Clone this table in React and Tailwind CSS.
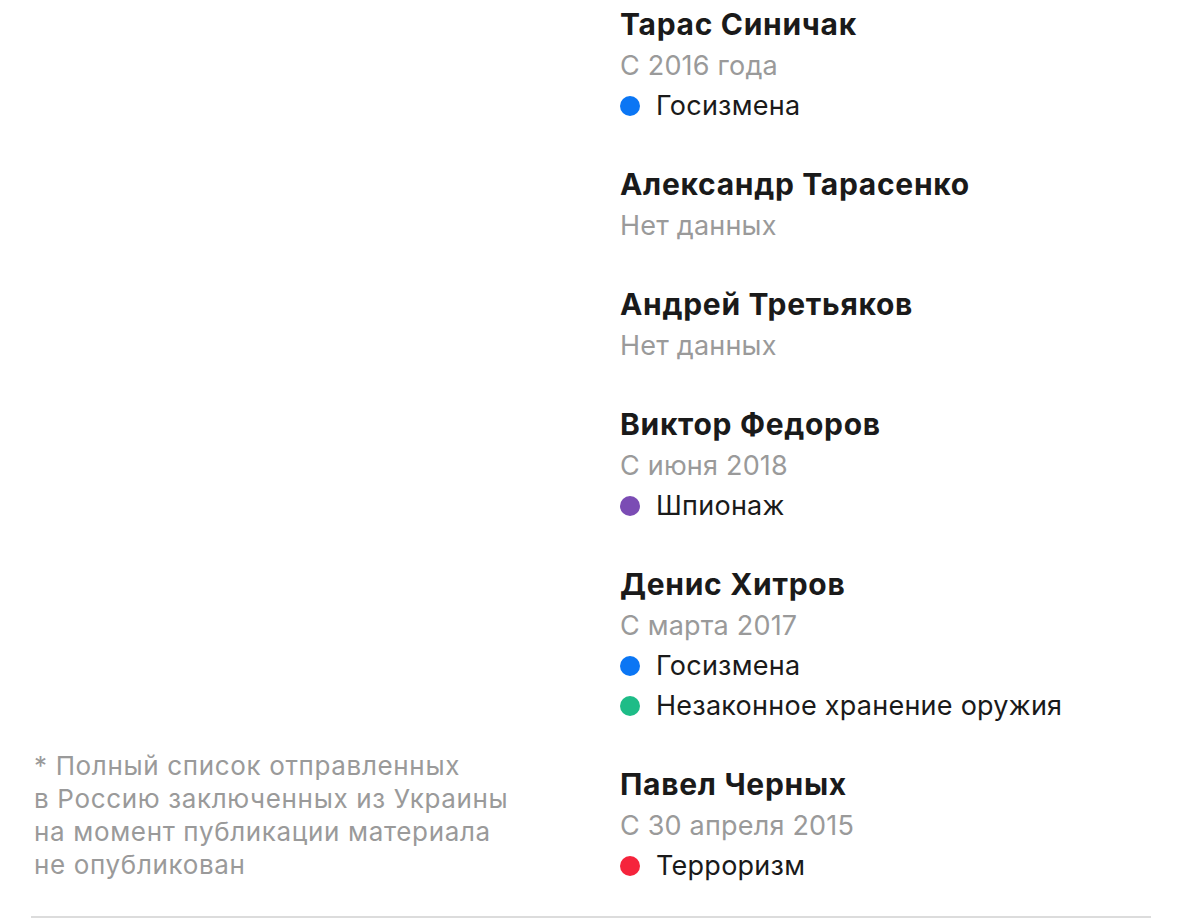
import React from "react"

const people = [
  { name: "Тарас Синичак", since: "С 2016 года", tags: [{ label: "Госизмена", color: "bg-[#0b76f4]" }] },
  { name: "Александр Тарасенко", since: "Нет данных", tags: [] },
  { name: "Андрей Третьяков", since: "Нет данных", tags: [] },
  { name: "Виктор Федоров", since: "С июня 2018", tags: [{ label: "Шпионаж", color: "bg-[#7b4cb4]" }] },
  {
    name: "Денис Хитров",
    since: "С марта 2017",
    tags: [
      { label: "Госизмена", color: "bg-[#0b76f4]" },
      { label: "Незаконное хранение оружия", color: "bg-[#1ebc87]" },
    ],
  },
  { name: "Павел Черных", since: "С 30 апреля 2015", tags: [{ label: "Терроризм", color: "bg-[#f5243c]" }] },
]

const Person = ({ person }) => (
  <div className="flex flex-col">
    <div className="h-10 flex items-center text-[30px] font-bold text-[#1a1a1a] tracking-[0.7px]">
      {person.name}
    </div>
    <div className="h-10 pt-1 flex items-center text-[27px] text-[#9a9a9a] tracking-[0.2px]">{person.since}</div>
    {person.tags.map((tag) => (
      <div key={tag.label} className="h-10 pt-1 flex items-center gap-4 text-[27px] text-[#1a1a1a] tracking-[0.25px]">
        <span className={`w-5 h-5 rounded-full shrink-0 ${tag.color}`} />
        {tag.label}
      </div>
    ))}
  </div>
)

export default function App() {
  return (
    <div className="bg-white w-[1177px] h-[924px] overflow-hidden font-['Inter',sans-serif]">
      <div className="ml-[31px] mr-[26px] pt-[4px] pb-[32px] flex border-b-2 border-[#dcdcdc]">
        <div className="flex-1 flex items-end pl-[3px] pb-[3px]">
          <p className="text-[26px] leading-[33px] text-[#9a9a9a] tracking-[0.65px]">
            * Полный список отправленных
            <br />в Россию заключенных из Украины
            <br />на момент публикации материала
            <br />не опубликован
          </p>
        </div>
        <div className="w-[531px] flex flex-col gap-10">
          {people.map((p) => (
            <Person key={p.name} person={p} />
          ))}
        </div>
      </div>
    </div>
  )
}
